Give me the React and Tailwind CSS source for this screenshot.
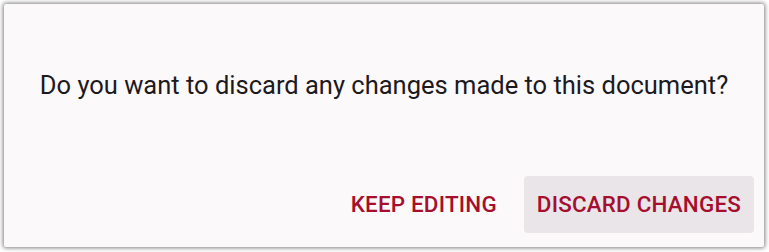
// Discard-changes confirmation dialog
export default function App() {
  return (
    <div className="h-[252px] w-[769px] bg-white p-[4px] font-['Roboto',sans-serif]">
      <div className="flex h-[243px] w-[760px] flex-col rounded-[2px] bg-[#fcf9fb] shadow-[0_0_4px_1px_rgba(0,0,0,0.5)]">
        <div className="flex h-[172px] items-center justify-center pb-[8px]">
          <p className="text-[25.5px] leading-none text-[#1c1a1d]">
            Do you want to discard any changes made to this document?
          </p>
        </div>
        <div className="flex justify-end gap-[14px] pr-[10px]">
          <button className="h-[57px] rounded-[4px] px-[13px] text-[22.4px] font-medium tracking-[0.2px] text-[#a50f2d]">
            KEEP EDITING
          </button>
          <button className="h-[57px] rounded-[4px] bg-[#e9e5e9] px-[13px] text-[22.4px] font-medium tracking-[0.2px] text-[#a50f2d]">
            DISCARD CHANGES
          </button>
        </div>
      </div>
    </div>
  )
}
